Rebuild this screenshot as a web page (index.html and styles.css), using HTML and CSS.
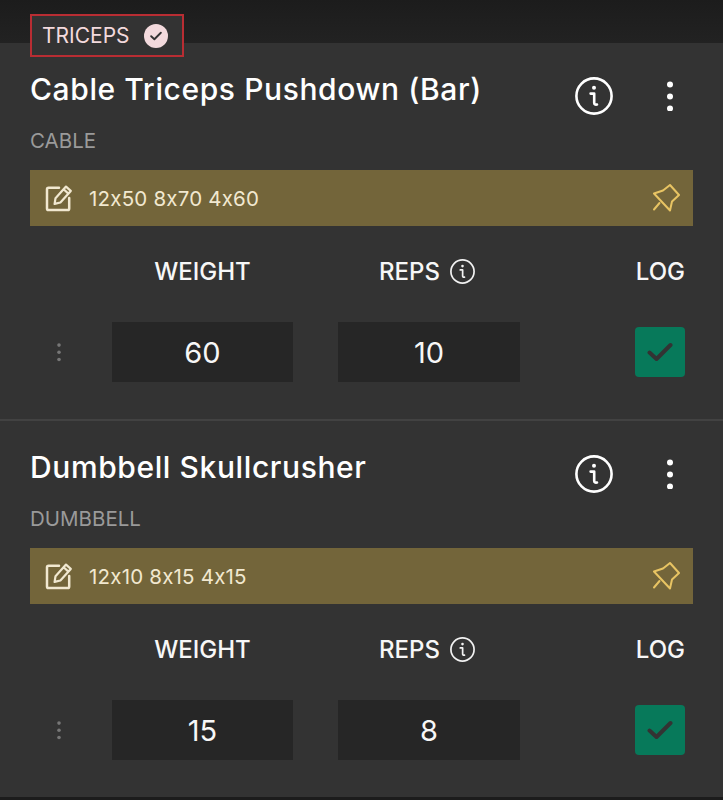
FILE: index.html
```html
<!DOCTYPE html>
<html lang="en">
<head>
<meta charset="utf-8">
<title>Triceps</title>
<link rel="stylesheet" href="styles.css">
</head>
<body>
<svg class="defs" width="0" height="0" aria-hidden="true">
  <symbol id="info" viewBox="0 0 38 38">
    <circle cx="19" cy="19" r="17.6" fill="none" stroke="currentColor" stroke-width="2.6"/>
    <circle cx="19" cy="10.8" r="2" fill="currentColor"/>
    <path d="M15.6 16.6h3.6v9.2c0 1.6 1 2.1 2.8 1.7" fill="none" stroke="currentColor" stroke-width="2.6" stroke-linecap="round" stroke-linejoin="round"/>
  </symbol>
  <symbol id="more" viewBox="0 0 10 30">
    <circle cx="5" cy="3.500" r="3" fill="currentColor"/>
    <circle cx="5" cy="15.500" r="3" fill="currentColor"/>
    <circle cx="5" cy="27.500" r="3" fill="currentColor"/>
  </symbol>
  <symbol id="edit" viewBox="0 0 28 28">
    <path d="M14 3.800H3.600A1.600 1.600 0 0 0 2 5.400v19A1.600 1.600 0 0 0 3.600 26h19a1.600 1.600 0 0 0 1.600-1.600V14" fill="none" stroke="currentColor" stroke-width="2.500" stroke-linecap="round"/>
    <path d="M10.500 14.200 21 2.600l4.800 4.300-10.400 11.600-5.800 1.400zM18.600 5.200l4.800 4.400" fill="none" stroke="currentColor" stroke-width="2.200" stroke-linejoin="round"/>
  </symbol>
  <symbol id="pin" viewBox="0 0 28 28">
    <path d="M18 1 27 11 20 17.500 18 26.500 2 9.500 11 6.500z" fill="none" stroke="currentColor" stroke-width="2" stroke-linejoin="round"/>
    <path d="M7.500 19 2 25.500" fill="none" stroke="currentColor" stroke-width="2" stroke-linecap="round"/>
  </symbol>
  <symbol id="check" viewBox="0 0 26 20">
    <path d="M2.500 10.500 9.500 17 23.500 3" fill="none" stroke="currentColor" stroke-width="4" stroke-linecap="round" stroke-linejoin="round"/>
  </symbol>
</svg>

<div class="band">
  <div class="tab">
    <span>TRICEPS</span>
    <span class="tab-badge"><svg class="tab-check"><use href="#check"/></svg></span>
  </div>
</div>

<section class="exercise">
  <div class="head">
    <h2 class="title">Cable Triceps Pushdown (Bar)</h2>
    <svg class="icon-info"><use href="#info"/></svg>
    <svg class="icon-more"><use href="#more"/></svg>
  </div>
  <div class="equipment">CABLE</div>
  <div class="note">
    <svg class="icon-edit"><use href="#edit"/></svg>
    <span class="note-text">12x50 8x70 4x60</span>
    <svg class="icon-pin"><use href="#pin"/></svg>
  </div>
  <div class="grid labels">
    <span></span>
    <span class="label">WEIGHT</span>
    <span class="label">REPS <svg class="icon-info-sm"><use href="#info"/></svg></span>
    <span class="label label-log">LOG</span>
  </div>
  <div class="grid set">
    <svg class="handle"><use href="#more"/></svg>
    <div class="field">60</div>
    <div class="field">10</div>
    <div class="log"><svg class="log-check"><use href="#check"/></svg></div>
  </div>
</section>

<section class="exercise">
  <div class="head">
    <h2 class="title">Dumbbell Skullcrusher</h2>
    <svg class="icon-info"><use href="#info"/></svg>
    <svg class="icon-more"><use href="#more"/></svg>
  </div>
  <div class="equipment">DUMBBELL</div>
  <div class="note">
    <svg class="icon-edit"><use href="#edit"/></svg>
    <span class="note-text">12x10 8x15 4x15</span>
    <svg class="icon-pin"><use href="#pin"/></svg>
  </div>
  <div class="grid labels">
    <span></span>
    <span class="label">WEIGHT</span>
    <span class="label">REPS <svg class="icon-info-sm"><use href="#info"/></svg></span>
    <span class="label label-log">LOG</span>
  </div>
  <div class="grid set">
    <svg class="handle"><use href="#more"/></svg>
    <div class="field">15</div>
    <div class="field">8</div>
    <div class="log"><svg class="log-check"><use href="#check"/></svg></div>
  </div>
</section>
</body>
</html>
```

FILE: styles.css
```css
* { box-sizing: border-box; }
html, body { margin: 0; height: 800px; overflow: hidden; }
body {
  background: #1c1c1c;
  color: #fff;
  font-family: "Inter", "Liberation Sans", sans-serif;
  font-feature-settings: "calt" 0;
}
.defs { position: absolute; }
.band {
  height: 43px;
  padding: 14px 0 0 30px;
  background: linear-gradient(#1c1c1c, #222);
}
.tab {
  position: relative;
  width: 154px;
  height: 43px;
  padding-left: 10px;
  display: flex;
  align-items: center;
  gap: 14px;
  background: #333;
  border: 2px solid #b92d33;
  color: #f3dadd;
  font-size: 21px;
}
.tab-badge {
  width: 24px;
  height: 24px;
  border-radius: 50%;
  background: #f3dadd;
  display: flex;
  align-items: center;
  justify-content: center;
  color: #333;
}
.tab-check { width: 12px; height: 10px; }
.exercise {
  height: 378px;
  padding: 0 30px;
  background: #333;
  border-bottom: 2px solid #424242;
}
.exercise:last-of-type { height: 376px; border-bottom: 0; }
.head {
  height: 88px;
  display: flex;
  align-items: center;
  padding-top: 17px;
}
.title {
  flex: 1;
  margin: 0;
  font-size: 30px;
  font-weight: 500;
  letter-spacing: 0.6px;
  position: relative;
  top: -7px;
  white-space: nowrap;
}
.icon-info { width: 38px; height: 38px; color: #fff; margin-right: 52px; }
.icon-more { width: 10px; height: 30px; color: #fff; margin-right: 18px; }
.equipment {
  height: 20px;
  line-height: 20px;
  font-size: 20.500px;
  color: #9a9a9a;
}
.note {
  height: 56px;
  margin-top: 19px;
  background: #73653a;
  display: flex;
  align-items: center;
  padding: 0 13px 0 15px;
  color: #f1e8d0;
}
.icon-edit { width: 28px; height: 28px; }
.note-text { flex: 1; margin-left: 16px; font-size: 20.500px; letter-spacing: 0.2px; }
.icon-pin { width: 28px; height: 28px; color: #e8c463; }
.grid {
  display: grid;
  grid-template-columns: 82px 181px 182px 1fr;
  align-items: center;
}
.labels { height: 44px; margin-top: 23px; }
.label {
  display: flex;
  align-items: center;
  justify-content: center;
  gap: 10px;
  font-size: 24px;
  font-weight: 500;
  color: #f7f7f7;
}
.labels .label:nth-child(3) { margin-left: 45px; width: 178px; }
.label-log { justify-content: flex-end; padding-right: 8px; }
.icon-info-sm { width: 25px; height: 25px; color: #f2f2f2; }
.set { height: 60px; margin-top: 29px; }
.handle { width: 6px; height: 26px; margin-left: 26px; color: #777; }
.field {
  height: 60px;
  background: #262626;
  display: flex;
  align-items: center;
  justify-content: center;
  font-size: 29px;
  color: #f7f7f7;
}
.set .field:nth-child(3) { margin-left: 45px; width: 182px; }
.log {
  width: 50px;
  height: 50px;
  justify-self: end;
  margin-right: 8px;
  border-radius: 4px;
  background: #07795a;
  display: flex;
  align-items: center;
  justify-content: center;
  color: #333;
}
.log-check { width: 26px; height: 20px; }
```
